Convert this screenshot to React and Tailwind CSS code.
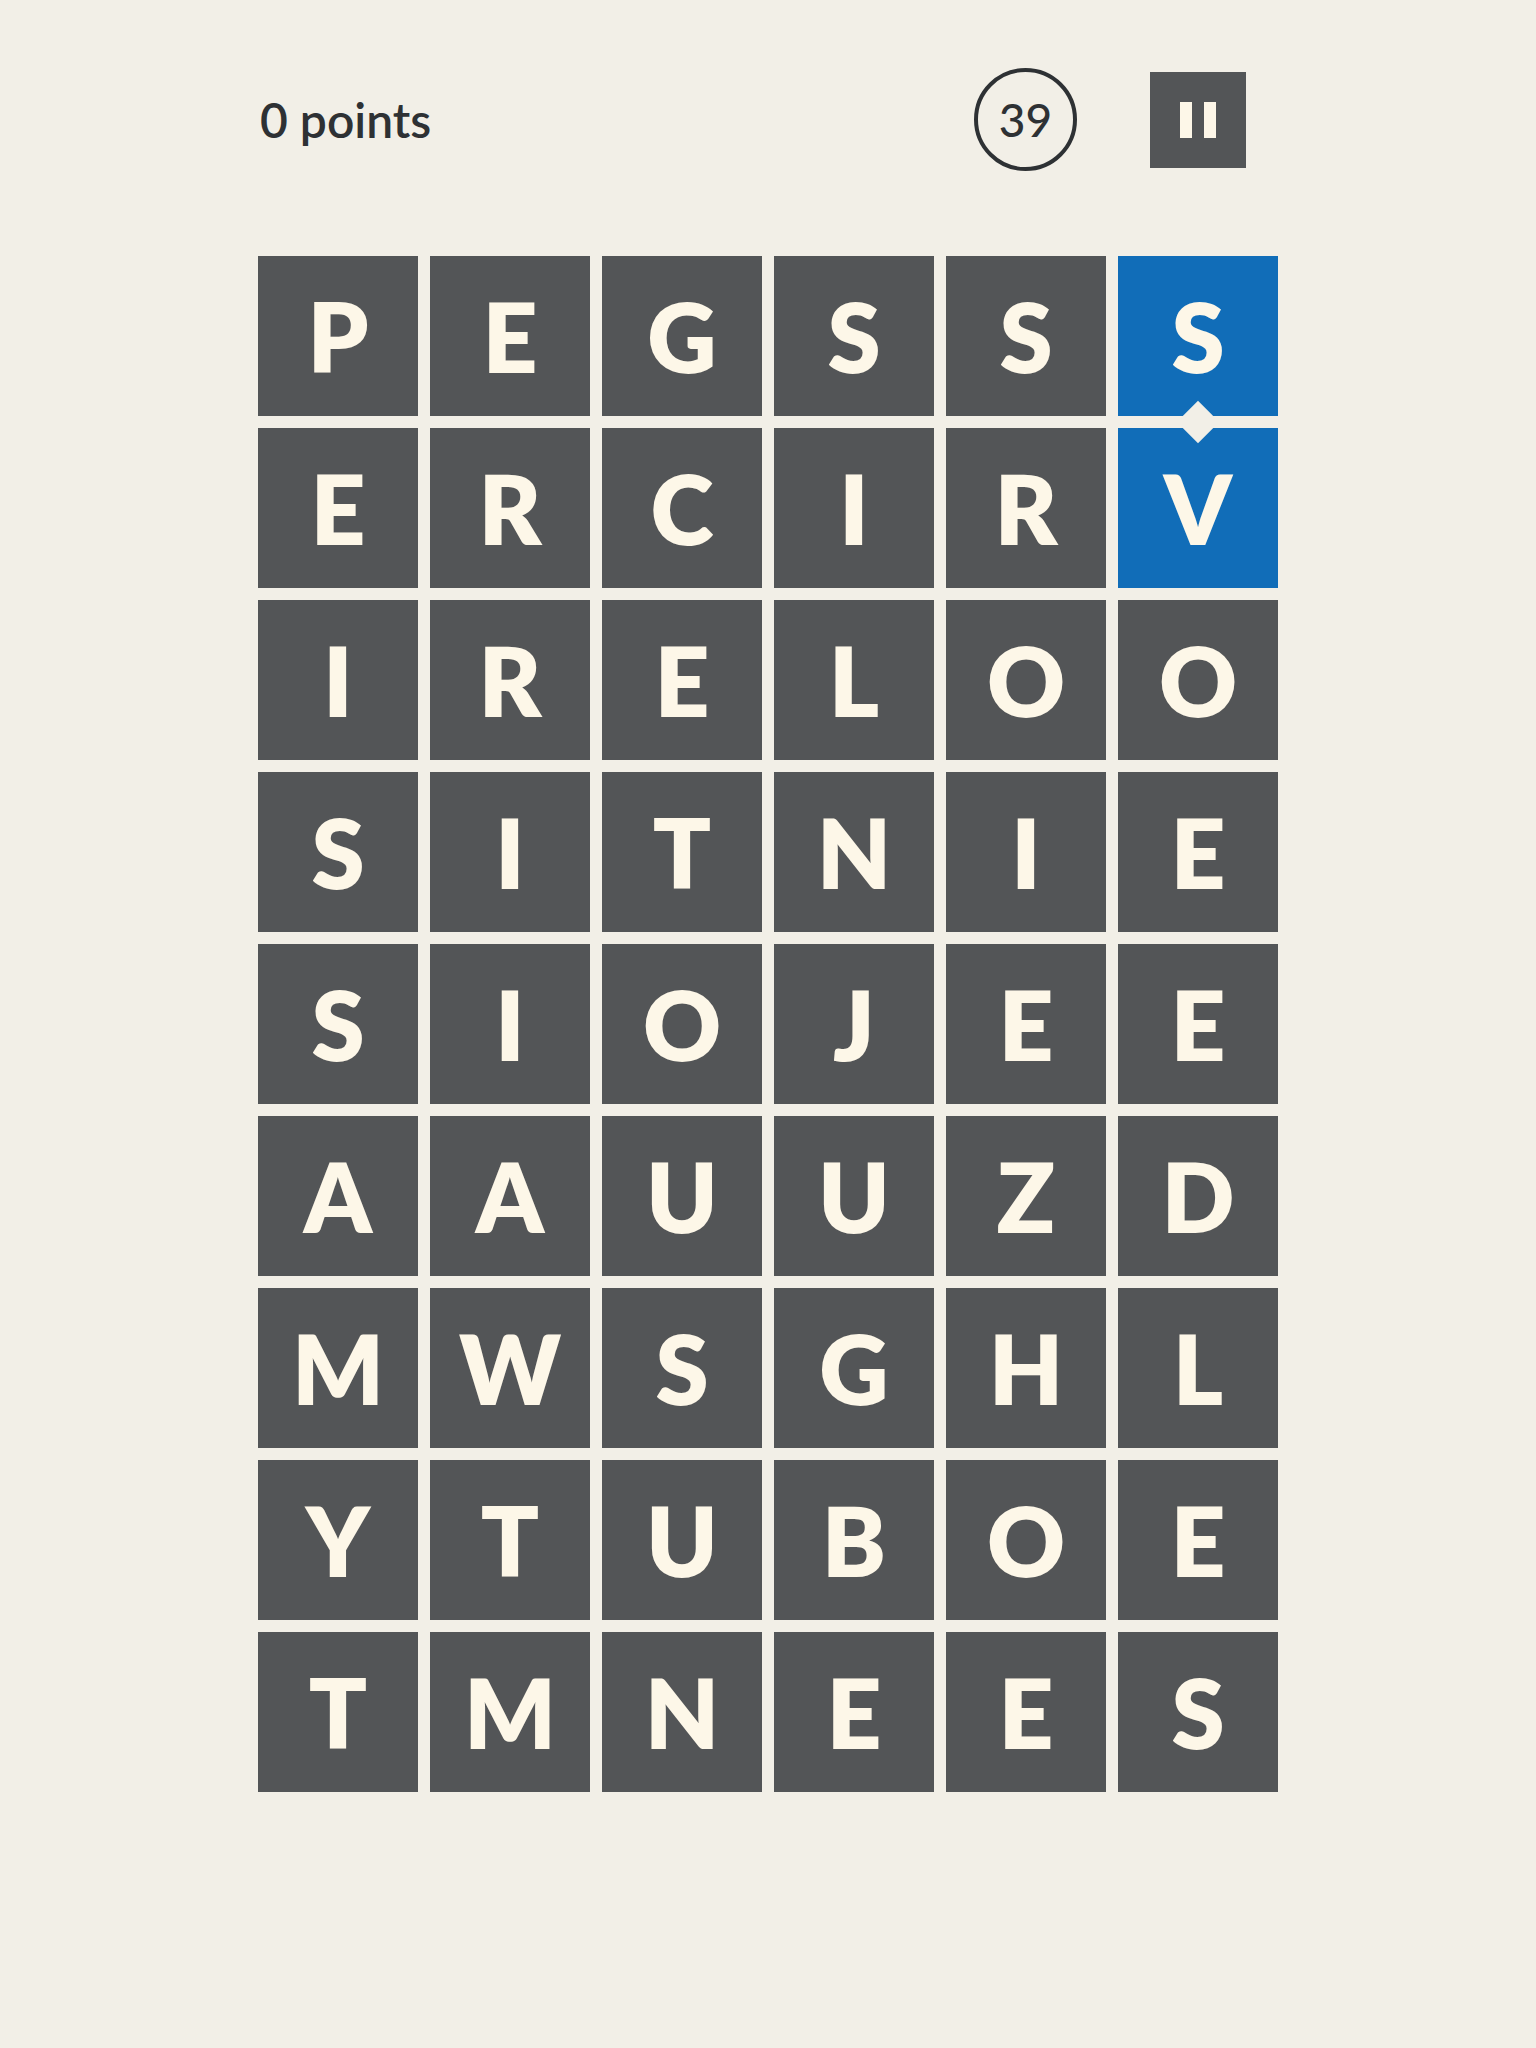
import React from "react";

const ROWS = [
  "PEGSSS",
  "ERCIRV",
  "IRELOO",
  "SITNIE",
  "SIOJEE",
  "AAUUZD",
  "MWSGHL",
  "YTUBOE",
  "TMNEES",
];

// tiles that are part of the current word (row, col)
const SELECTED = ["0-5", "1-5"];

function Tile({ letter, selected, link }) {
  return (
    <div
      className={
        "relative h-[160px] flex items-center justify-center " +
        (link ? "z-20 " : selected ? "z-10 " : "") +
        (selected ? "bg-[#116db8]" : "bg-[#535557]")
      }
    >
      <span className="text-[96px] leading-none font-extrabold text-[#fdf7e8]">{letter}</span>
      {link && (
        <div className="absolute left-1/2 -bottom-[21px] w-[30px] h-[30px] -translate-x-1/2 rotate-45 bg-[#f2efe7]" />
      )}
    </div>
  );
}

export default function App() {
  return (
    <div className="min-h-[2048px] bg-[#f2efe7]" style={{ fontFamily: "Lato, 'Open Sans', sans-serif" }}>
      <div className="w-[1020px] mx-auto pt-[68px]">
        <header className="flex items-center h-[103px] pl-[2px] pr-[32px]">
          <div className="text-[48px] font-semibold text-[#2e3134] leading-none">0 points</div>
          <div className="ml-auto w-[103px] h-[103px] rounded-full border-4 border-[#2e3134] flex items-center justify-center">
            <span className="text-[46px] leading-none font-medium text-[#2e3134]">39</span>
          </div>
          <button className="ml-[73px] w-[96px] h-[96px] bg-[#535557] flex items-center justify-center gap-[12px]">
            <span className="w-[12px] h-[36px] bg-[#fdf7e8]" />
            <span className="w-[12px] h-[36px] bg-[#fdf7e8]" />
          </button>
        </header>

        <div className="mt-[85px] grid grid-cols-6 gap-[12px]">
          {ROWS.map((row, r) =>
            row.split("").map((ch, c) => (
              <Tile
                key={r + "-" + c}
                letter={ch}
                selected={SELECTED.includes(r + "-" + c)}
                link={r === 0 && c === 5}
              />
            ))
          )}
        </div>
      </div>
    </div>
  );
}
